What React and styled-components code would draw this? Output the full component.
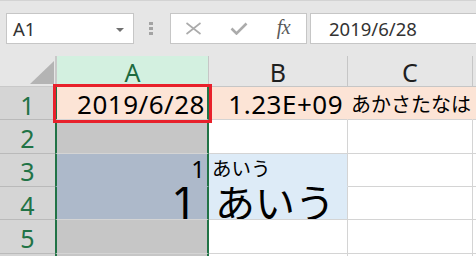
import React from 'react';
import styled, { createGlobalStyle } from 'styled-components';

const GlobalStyle = createGlobalStyle`
  html, body {
    margin: 0;
    padding: 0;
    background: #ffffff;
    overflow: hidden;
  }
  body {
    font-family: "Noto Sans", "Noto Sans CJK JP", sans-serif;
  }
`;

const GRID = '#d4d4d4';
const GREEN = '#217346';

const Page = styled.div`
  width: 476px;
  height: 256px;
  overflow: hidden;
  background: #fff;
`;

/* ---------- formula bar ---------- */

const FormulaBar = styled.div`
  height: 56px;
  box-sizing: border-box;
  background: #e6e6e6;
  border-top: 1px solid #d3d3d3;
  display: flex;
  align-items: flex-start;
  padding: 12px 0 0 6px;
`;

const Box = styled.div`
  height: 31px;
  box-sizing: border-box;
  background: #fff;
  border: 1px solid #c6c6c6;
  display: flex;
  align-items: center;
`;

const NameBox = styled(Box)`
  width: 128px;
  justify-content: space-between;
  padding: 0 9px 0 6px;
  font-size: 18.5px;
  color: #333;
`;

const Caret = styled.span`
  width: 0;
  height: 0;
  border-left: 4px solid transparent;
  border-right: 4px solid transparent;
  border-top: 4px solid #707070;
  margin-top: 2px;
`;

const Grip = styled.div`
  display: flex;
  flex-direction: column;
  gap: 2px;
  margin: 9px 17px 0 15px;
`;

const Dot = styled.span`
  width: 4px;
  height: 3px;
  background: #a3a3a3;
`;

const ButtonBox = styled(Box)`
  width: 137px;
  margin-right: 3px;
`;

const BarButton = styled.span`
  flex: 1;
  display: flex;
  align-items: center;
  justify-content: center;
  height: 100%;
`;

const Fx = styled.span`
  font-family: "Liberation Serif", "DejaVu Serif", serif;
  font-style: italic;
  font-size: 20px;
  color: #5a5a5a;
  letter-spacing: -0.5px;
  margin-top: -2px;
`;

const FormulaInput = styled(Box)`
  flex: 1;
  border-right: none;
  padding-left: 18px;
  font-size: 18.5px;
  color: #333;
`;

/* ---------- sheet ---------- */

const Sheet = styled.div`
  display: grid;
  grid-template-columns: 55px 154px 139px 125px 1fr;
  grid-template-rows: 31px repeat(6, 33.333px);
`;

const Corner = styled.div`
  background: #e6e6e6;
  border-bottom: 1px solid #c9c9c9;
  display: flex;
  justify-content: flex-end;
  align-items: flex-end;
  padding: 0 1px 2px 0;
`;

const Triangle = styled.span`
  width: 0;
  height: 0;
  border-left: 24px solid transparent;
  border-bottom: 23px solid #b4b4b4;
`;

const ColHead = styled.div`
  background: ${p => (p.$active ? '#d3f0e0' : '#e6e6e6')};
  color: ${p => (p.$active ? '#1d6b40' : '#1f1f1f')};
  border-right: 1px solid #c6c6c6;
  border-left: ${p => (p.$active ? '2px solid #c9c9c9' : 'none')};
  border-bottom: 1px solid #c6c6c6;
  display: flex;
  align-items: center;
  justify-content: center;
  font-size: 25px;
  padding-top: 2px;
`;

const RowHead = styled.div`
  background: #d5d5d5;
  color: ${GREEN};
  border-bottom: 1px solid #bababa;
  display: flex;
  align-items: center;
  justify-content: center;
  font-size: 25px;
  padding-top: 3px;
`;

const Cell = styled.div`
  position: relative;
  background: ${p => p.$fill || '#fff'};
  border-bottom: 1px solid ${p => (p.$joinDown ? p.$fill : GRID)};
  border-right: ${p =>
    p.$sel ? `2px solid ${GREEN}` : `1px solid ${p.$joinRight ? p.$fill : GRID}`};
  border-left: ${p => (p.$sel ? `2px solid ${GREEN}` : 'none')};
  display: flex;
  align-items: flex-end;
  justify-content: ${p => (p.$right ? 'flex-end' : 'flex-start')};
  padding: ${p => (p.$right ? `0 ${p.$pad ?? 3}px 0 0` : `0 0 0 ${p.$pad ?? 3}px`)};
  overflow: ${p => (p.$clip ? 'hidden' : 'visible')};
  white-space: nowrap;
  color: #000;
`;

const Value = styled.span`
  display: block;
  font-size: ${p => p.$size}px;
  letter-spacing: ${p => p.$track || 0}px;
  line-height: 1;
  margin-bottom: ${p => p.$lift}px;
`;

const Highlight = styled.div`
  position: absolute;
  z-index: 5;
  top: -3px;
  left: -4px;
  right: -5px;
  bottom: -4px;
  border: 3px solid #e8212b;
  pointer-events: none;
`;

const PEACH = '#fce4d6';
const SELGRAY = '#c6c6c6';
const SELBLUE = '#adb9ca';
const BLUE = '#ddebf7';

const CrossIcon = () => (
  <svg width="17" height="13" viewBox="0 0 17 13">
    <path d="M1.5 1 L15.5 12 M15.5 1 L1.5 12" stroke="#ababab" strokeWidth="1.6" fill="none" />
  </svg>
);

const CheckIcon = () => (
  <svg width="18" height="13" viewBox="0 0 18 13">
    <path d="M1.5 6.5 L6.5 11.5 L16.5 1.5" stroke="#ababab" strokeWidth="2.6" fill="none" />
  </svg>
);

export default function App() {
  return (
    <Page>
      <GlobalStyle />
      <FormulaBar>
        <NameBox>
          <span>A1</span>
          <Caret />
        </NameBox>
        <Grip>
          <Dot />
          <Dot />
          <Dot />
        </Grip>
        <ButtonBox>
          <BarButton><CrossIcon /></BarButton>
          <BarButton><CheckIcon /></BarButton>
          <BarButton><Fx>fx</Fx></BarButton>
        </ButtonBox>
        <FormulaInput>2019/6/28</FormulaInput>
      </FormulaBar>

      <Sheet>
        <Corner><Triangle /></Corner>
        <ColHead $active>A</ColHead>
        <ColHead>B</ColHead>
        <ColHead>C</ColHead>
        <ColHead />

        <RowHead>1</RowHead>
        <Cell $sel $right $pad={2} $fill={PEACH}>
          <Value $size={26} $track={0.5} $lift={2}>2019/6/28</Value>
          <Highlight />
        </Cell>
        <Cell $right $pad={4} $fill={PEACH} $joinRight>
          <Value $size={26} $track={0.5} $lift={2}>1.23E+09</Value>
        </Cell>
        <Cell $pad={3} $fill={PEACH} $joinRight>
          <Value $size={20} $lift={4}>あかさたなは</Value>
        </Cell>
        <Cell $fill={PEACH} />

        <RowHead>2</RowHead>
        <Cell $sel $fill={SELGRAY} />
        <Cell />
        <Cell />
        <Cell />

        <RowHead>3</RowHead>
        <Cell $sel $right $pad={2} $fill={SELBLUE} $joinDown>
          <Value $size={24} $lift={5}>1</Value>
        </Cell>
        <Cell $pad={3} $fill={BLUE} $joinDown>
          <Value $size={19.5} $lift={7}>あいう</Value>
        </Cell>
        <Cell />
        <Cell />

        <RowHead>4</RowHead>
        <Cell $sel $right $clip $pad={10} $fill={SELBLUE}>
          <Value $size={45} $lift={-5}>1</Value>
        </Cell>
        <Cell $clip $pad={6} $fill={BLUE}>
          <Value $size={40} $lift={-4}>あいう</Value>
        </Cell>
        <Cell />
        <Cell />

        <RowHead>5</RowHead>
        <Cell $sel $fill={SELGRAY} />
        <Cell />
        <Cell />
        <Cell />

        <RowHead />
        <Cell $sel $fill={SELGRAY} />
        <Cell />
        <Cell />
        <Cell />
      </Sheet>
    </Page>
  );
}
